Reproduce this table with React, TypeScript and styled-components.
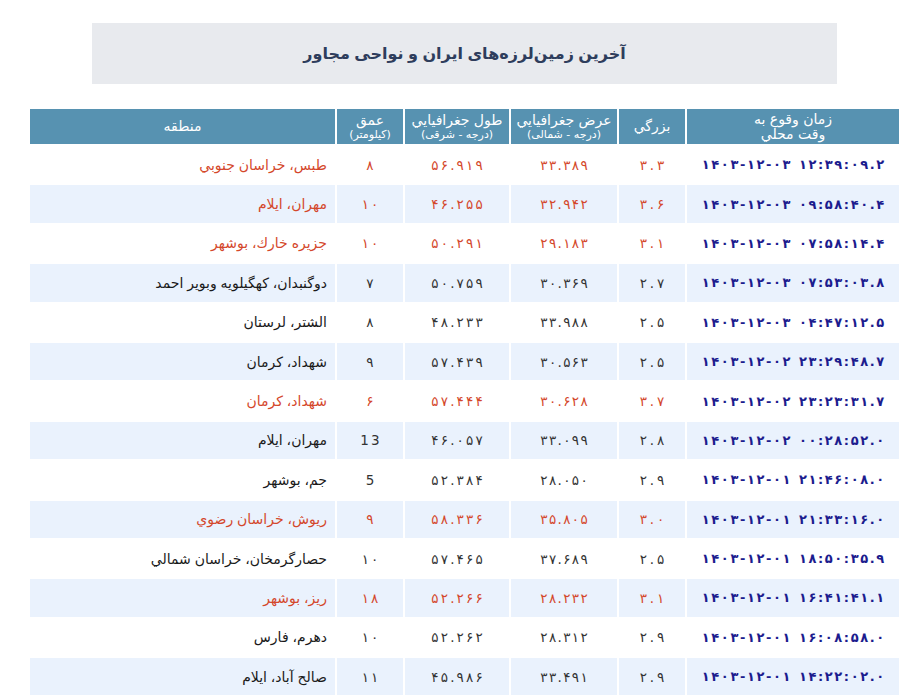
import React from "react";
import styled, { createGlobalStyle } from "styled-components";

const Global = createGlobalStyle`
  html, body { margin: 0; padding: 0; background: #ffffff; }
  body { font-family: "Liberation Sans", "DejaVu Sans", sans-serif; }
`;

const Page = styled.div`
  width: 873px;
  margin-left: 28px;
  padding-top: 23px;
  direction: rtl;
`;

const TitleBox = styled.div`
  width: 745px;
  height: 61px;
  margin: 0 auto 23px;
  background: #e8eaee;
  display: flex;
  align-items: center;
  justify-content: center;
`;

const Title = styled.h1`
  margin: 0;
  font-family: "Liberation Sans", "DejaVu Sans", sans-serif;
  font-size: 16px;
  font-weight: bold;
  color: #2e3d5c;
`;

const Table = styled.table`
  width: 873px;
  table-layout: fixed;
  border-collapse: separate;
  border-spacing: 2px;
  direction: rtl;
`;

const Th = styled.th`
  background: #5792b1;
  color: #ffffff;
  font-family: "DejaVu Sans", sans-serif;
  font-weight: normal;
  font-size: 14px;
  line-height: 15px;
  height: 35px;
  padding: 0 4px;
  text-align: center;
  vertical-align: middle;
`;

const Sub = styled.span`
  display: block;
  font-size: 11px;
  line-height: 13px;
`;

const Tr = styled.tr<{ $alt: boolean }>`
  background: ${(p) => (p.$alt ? "#eaf2fd" : "#ffffff")};
`;

const Td = styled.td<{ $red: boolean; $kind: "date" | "num" | "place" }>`
  height: 37.4px;
  padding: 0 8px;
  vertical-align: middle;
  text-align: ${(p) => (p.$kind === "place" ? "right" : "center")};
  color: ${(p) =>
    p.$kind === "date" ? "#1c1c8e" : p.$red ? "#d4472b" : p.$kind === "place" ? "#1a1a1a" : "#333333"};
  font-family: ${(p) =>
    p.$kind === "place" ? `"Liberation Sans", "DejaVu Sans", sans-serif` : `"DejaVu Sans", sans-serif`};
  font-size: ${(p) => (p.$kind === "place" ? "14px" : p.$kind === "date" ? "13px" : "13.5px")};
  font-weight: ${(p) => (p.$kind === "date" ? "bold" : "normal")};
  white-space: nowrap;
`;

const Ltr = styled.span`
  direction: ltr;
  unicode-bidi: isolate;
  display: inline-block;
`;

const Ch = styled.span<{ $gap: number }>`
  display: inline-block;
  margin: 0 ${(p) => p.$gap}px;
`;

const fa = (s: string) => s.replace(/[0-9]/g, (d) => "۰۱۲۳۴۵۶۷۸۹"[Number(d)]);

function Spaced({ text, gap }: { text: string; gap: number }) {
  return (
    <Ltr>
      {Array.from(text).map((c, i) =>
        c === " " ? <Ch key={i} $gap={1.2}>&nbsp;</Ch> : <Ch key={i} $gap={gap}>{c}</Ch>
      )}
    </Ltr>
  );
}

type Row = {
  time: string;
  mag: string;
  lat: string;
  lon: string;
  depth: string;
  place: string;
  red: boolean;
};

const rows: Row[] = [
  { time: "1403-12-03 12:39:09.2", mag: "3.3", lat: "33.389", lon: "56.919", depth: fa("8"), place: "طبس، خراسان جنوبي", red: true },
  { time: "1403-12-03 09:58:40.4", mag: "3.6", lat: "32.942", lon: "46.255", depth: fa("10"), place: "مهران، ايلام", red: true },
  { time: "1403-12-03 07:58:14.4", mag: "3.1", lat: "29.183", lon: "50.291", depth: fa("10"), place: "جزيره خارك، بوشهر", red: true },
  { time: "1403-12-03 07:53:03.8", mag: "2.7", lat: "30.369", lon: "50.759", depth: fa("7"), place: "دوگنبدان، كهگيلويه وبوير احمد", red: false },
  { time: "1403-12-03 04:47:12.5", mag: "2.5", lat: "33.988", lon: "48.233", depth: fa("8"), place: "الشتر، لرستان", red: false },
  { time: "1403-12-02 23:29:48.7", mag: "2.5", lat: "30.563", lon: "57.439", depth: fa("9"), place: "شهداد، كرمان", red: false },
  { time: "1403-12-02 23:23:31.7", mag: "3.7", lat: "30.628", lon: "57.444", depth: fa("6"), place: "شهداد، كرمان", red: true },
  { time: "1403-12-02 00:28:52.0", mag: "2.8", lat: "33.099", lon: "46.057", depth: "13", place: "مهران، ايلام", red: false },
  { time: "1403-12-01 21:46:08.0", mag: "2.9", lat: "28.050", lon: "52.384", depth: "5", place: "جم، بوشهر", red: false },
  { time: "1403-12-01 21:33:16.0", mag: "3.0", lat: "35.805", lon: "58.336", depth: fa("9"), place: "ريوش، خراسان رضوي", red: true },
  { time: "1403-12-01 18:50:35.9", mag: "2.5", lat: "37.689", lon: "57.465", depth: fa("10"), place: "حصارگرمخان، خراسان شمالي", red: false },
  { time: "1403-12-01 16:41:41.1", mag: "3.1", lat: "28.232", lon: "52.266", depth: fa("18"), place: "ريز، بوشهر", red: true },
  { time: "1403-12-01 16:08:58.0", mag: "2.9", lat: "28.312", lon: "52.262", depth: fa("10"), place: "دهرم، فارس", red: false },
  { time: "1403-12-01 14:22:02.0", mag: "2.9", lat: "33.491", lon: "45.986", depth: fa("11"), place: "صالح آباد، ايلام", red: false },
];

export default function App() {
  return (
    <>
      <Global />
      <Page>
        <TitleBox>
          <Title>آخرین زمین‌لرزه‌های ایران و نواحی مجاور</Title>
        </TitleBox>
        <Table>
          <colgroup>
            <col style={{ width: 212 }} />
            <col style={{ width: 66 }} />
            <col style={{ width: 106 }} />
            <col style={{ width: 104 }} />
            <col style={{ width: 66 }} />
            <col style={{ width: 305 }} />
          </colgroup>
          <thead>
            <tr>
              <Th>
                زمان وقوع به
                <br />
                وقت محلي
              </Th>
              <Th>بزرگي</Th>
              <Th>
                عرض جغرافيايي
                <Sub>(درجه - شمالی)</Sub>
              </Th>
              <Th>
                طول جغرافيايي
                <Sub>(درجه - شرقی)</Sub>
              </Th>
              <Th>
                عمق
                <Sub>(کیلومتر)</Sub>
              </Th>
              <Th>منطقه</Th>
            </tr>
          </thead>
          <tbody>
            {rows.map((r, i) => (
              <Tr key={i} $alt={i % 2 === 1}>
                <Td $kind="date" $red={r.red}>
                  <Spaced text={fa(r.time)} gap={0.8} />
                </Td>
                <Td $kind="num" $red={r.red}>
                  <Spaced text={fa(r.mag)} gap={1.4} />
                </Td>
                <Td $kind="num" $red={r.red}>
                  <Spaced text={fa(r.lat)} gap={0.7} />
                </Td>
                <Td $kind="num" $red={r.red}>
                  <Spaced text={fa(r.lon)} gap={1.1} />
                </Td>
                <Td $kind="num" $red={r.red}>
                  <Spaced text={r.depth} gap={1.1} />
                </Td>
                <Td $kind="place" $red={r.red}>
                  {r.place}
                </Td>
              </Tr>
            ))}
          </tbody>
        </Table>
      </Page>
    </>
  );
}
